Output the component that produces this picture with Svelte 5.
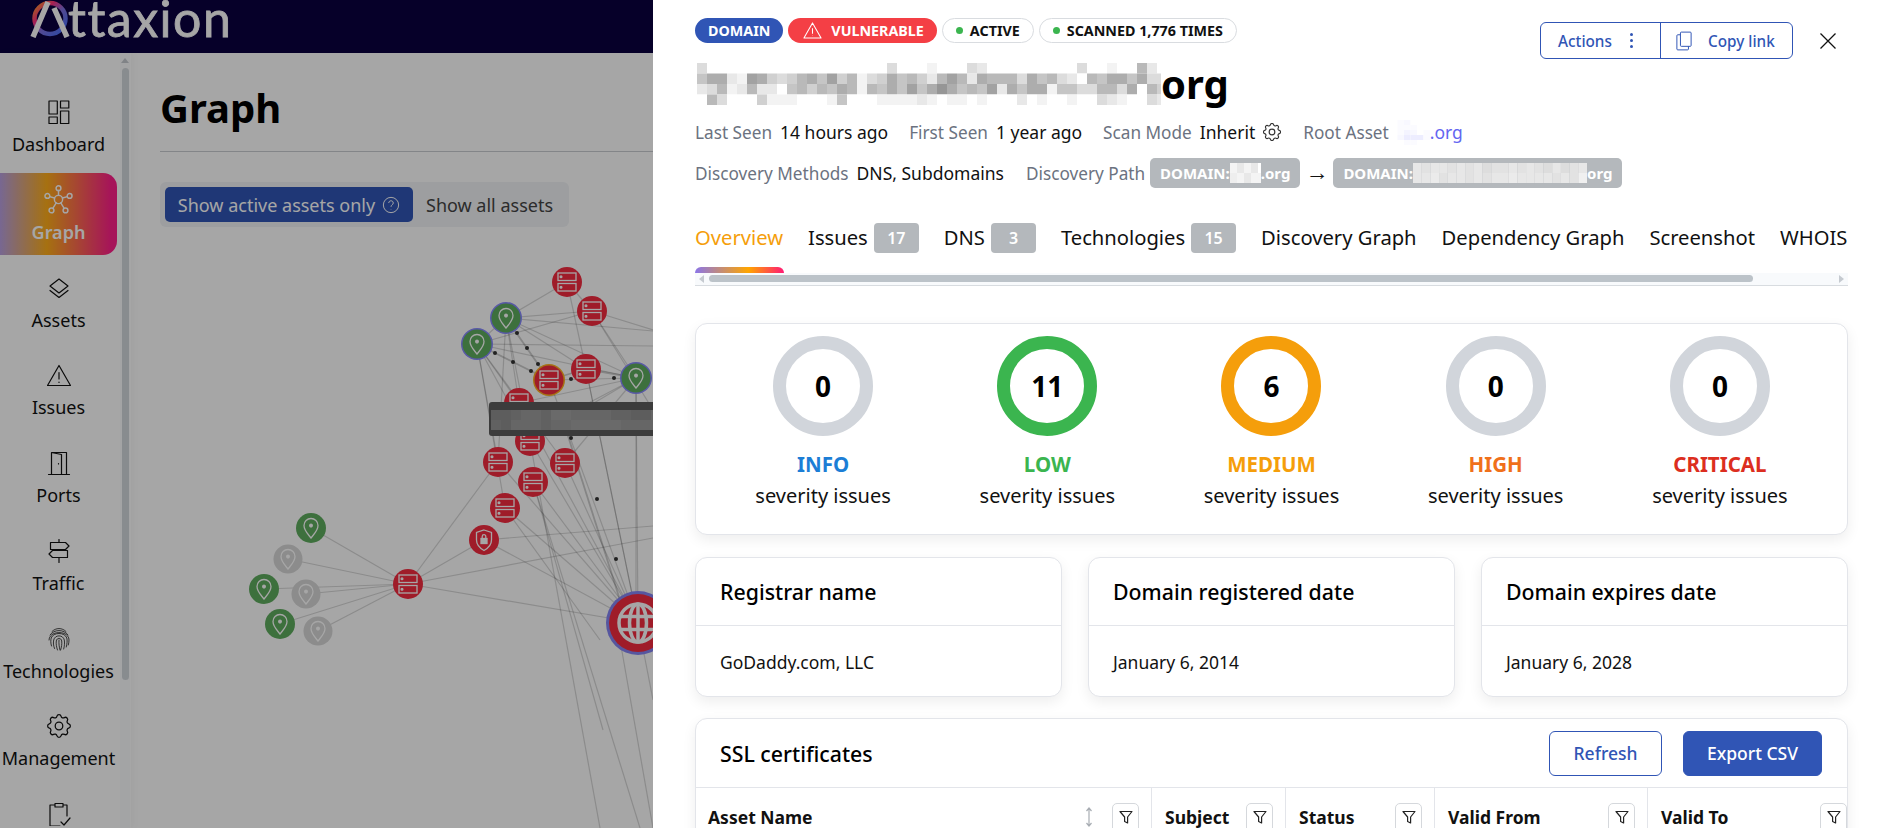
<script>
const navItems = [
  { label: 'Dashboard', icon: 'dashboard' },
  { label: 'Graph', icon: 'graph', active: true },
  { label: 'Assets', icon: 'assets' },
  { label: 'Issues', icon: 'issues' },
  { label: 'Ports', icon: 'ports' },
  { label: 'Traffic', icon: 'traffic' },
  { label: 'Technologies', icon: 'tech' },
  { label: 'Management', icon: 'gear' },
  { label: '', icon: 'tasks' }
]

const nodes = {
  a: [567, 282, 'server'], b: [592, 311, 'server'], c: [506, 318, 'pin', 'ring'], d: [477, 344, 'pin', 'ring'],
  e: [549, 380, 'server', 'warn'], f: [586, 369, 'server'], g: [636, 378, 'pin', 'ring'], h: [519, 403, 'server'],
  i: [562, 417, 'server'], j: [530, 441, 'server'], k: [498, 462, 'server'], l: [565, 463, 'server'],
  m: [533, 482, 'server'], n: [505, 508, 'server'], o: [484, 540, 'shield'], hub: [408, 584, 'server'],
  p1: [311, 528, 'pin'], p2: [288, 559, 'pin', 'off'], p3: [264, 589, 'pin'], p4: [306, 594, 'pin', 'off'],
  p5: [280, 624, 'pin'], p6: [318, 631, 'pin', 'off'], glob: [638, 623, 'globe']
}

const edges = [
  ['hub', 'p1'], ['hub', 'p2'], ['hub', 'p3'], ['hub', 'p4'], ['hub', 'p5'], ['hub', 'p6'], ['hub', 'o'], ['hub', 'k'], ['hub', 'glob'],
  ['o', 'glob'], ['n', 'glob'], ['m', 'glob'], ['l', 'glob'], ['k', 'glob'], ['j', 'glob'], ['h', 'glob'], ['e', 'glob'], ['f', 'glob'],
  ['a', 'c'], ['a', 'b'], ['a', 'f'], ['b', 'c'], ['b', 'd'], ['b', 'g'], ['c', 'd'], ['c', 'f'], ['c', 'h'], ['c', 'j'], ['c', 'k'],
  ['d', 'h'], ['d', 'j'], ['d', 'k'], ['d', 'n'], ['d', 'l'], ['d', 'g'], ['c', 'g'], ['e', 'g'], ['h', 'g'], ['j', 'g'], ['i', 'g'], ['l', 'g'], ['f', 'glob'], ['g', 'glob']
]
const freeEdges = [
  [408, 584, 653, 538], [484, 540, 653, 526], [533, 482, 603, 730], [533, 482, 640, 828], [530, 441, 600, 828],
  [592, 311, 653, 330], [506, 318, 653, 331], [477, 344, 653, 346], [592, 311, 653, 410], [636, 378, 636, 600],
  [638, 623, 653, 700], [620, 640, 653, 828], [505, 508, 600, 640]
]
const dotted = [[506, 318, 549, 380], [477, 344, 549, 380], [549, 380, 586, 369], [586, 369, 636, 378], [562, 417, 620, 600]]
const dots = [[517, 333], [527, 348], [538, 364], [495, 353], [513, 362], [531, 371], [571, 379], [614, 378], [571, 438], [597, 499], [616, 559]]

// mosaics of the blurred hostnames, one hex digit per cell (0 dark, f white)
const titleRows = [
  'cffffffffffffffffffcfffefffcdfffffffffcffeff9df',
  'a88de78bcb98a7b9ecb8a9bd979d8999c8a9cdf9a88a8ccf',
  'dc9ed9ddfa9b9a89e9a8a7a868a9a7d8a88eaacc99c8f9bf',
  'f9cfffbeeefffeafffeeeedefeefefffdfeffeffcdeffcdc'
]
const rootRows = ['fedfff', 'feeeff', 'fecdfe', 'fdaaae', 'ffeeff']
const chipOneRows = ['dbdbff', 'cdbdd']
const chipTwoRows = ['dcddcdcdbccdcdcbdbcd', 'ddecddcdcddeddddcdcf']
const tipRows = ['5567768877776655786', '6577767788888777787']

function gray(v, lo, hi) {
  const n = Math.round(lo + (hi - lo) * parseInt(v, 16) / 15)
  return `rgb(${n},${n},${n})`
}
function lav(v) {
  const k = parseInt(v, 16) / 15
  return `rgb(${Math.round(200 + 55 * k)},${Math.round(200 + 55 * k)},255)`
}

const tabs = [
  { label: 'Overview', active: true },
  { label: 'Issues', count: 17 },
  { label: 'DNS', count: 3 },
  { label: 'Technologies', count: 15 },
  { label: 'Discovery Graph' },
  { label: 'Dependency Graph' },
  { label: 'Screenshot' },
  { label: 'WHOIS' }
]

const severities = [
  { name: 'INFO', n: 0, color: '#1c7ed6', ring: '#d1d5db' },
  { name: 'LOW', n: 11, color: '#3bb54f', ring: '#3bb54f' },
  { name: 'MEDIUM', n: 6, color: '#f59e0b', ring: '#f59e0b' },
  { name: 'HIGH', n: 0, color: '#f0701a', ring: '#d1d5db' },
  { name: 'CRITICAL', n: 0, color: '#dc2e20', ring: '#d1d5db' }
]

const infoCards = [
  { title: 'Registrar name', value: 'GoDaddy.com, LLC' },
  { title: 'Domain registered date', value: 'January 6, 2014' },
  { title: 'Domain expires date', value: 'January 6, 2028' }
]

const columns = [
  { label: 'Asset Name', sort: true },
  { label: 'Subject' },
  { label: 'Status' },
  { label: 'Valid From' },
  { label: 'Valid To' }
]

const gearPath = 'M10.325 4.317c.426-1.756 2.924-1.756 3.35 0a1.724 1.724 0 0 0 2.573 1.066c1.543-.94 3.31.826 2.37 2.37a1.724 1.724 0 0 0 1.065 2.572c1.756.426 1.756 2.924 0 3.35a1.724 1.724 0 0 0-1.066 2.573c.94 1.543-.826 3.31-2.37 2.37a1.724 1.724 0 0 0-2.572 1.065c-.426 1.756-2.924 1.756-3.35 0a1.724 1.724 0 0 0-2.573-1.066c-1.543.94-3.31-.826-2.37-2.37a1.724 1.724 0 0 0-1.065-2.572c-1.756-.426-1.756-2.924 0-3.35a1.724 1.724 0 0 0 1.066-2.573c-.94-1.543.826-3.31 2.37-2.37c1 .608 2.296.07 2.572-1.065z'
</script>

{#snippet navIcon(name)}
  <svg class="nav-icon" class:big={name === 'graph'} viewBox={name === 'gear' ? '2.500 2.500 19 19' : '0 0 24 24'} fill="none" stroke="#111" stroke-width={name === 'gear' ? 1 : name === 'tech' ? .75 : 1.2} stroke-linecap="round" stroke-linejoin="round">
    {#if name === 'dashboard'}
      <rect x="2" y="1" width="8.300" height="13" /><rect x="13.500" y="1" width="8.300" height="7" /><rect x="2" y="17" width="8.300" height="6.500" /><rect x="13.500" y="11" width="8.300" height="12.500" />
    {:else if name === 'graph'}
      <circle cx="12" cy="12" r="3.400" /><circle cx="12" cy="2.600" r="2" /><circle cx="2.800" cy="9" r="2" /><circle cx="21.200" cy="9" r="2" /><circle cx="6.200" cy="21" r="2" /><circle cx="17.800" cy="21" r="2" />
      <path d="M12 4.600v4M4.700 9.600l4 1.200M19.300 9.600l-4 1.200M7.300 19.300l2.800-4.500M16.700 19.300l-2.800-4.500" />
    {:else if name === 'assets'}
      <path d="M12 3l9 7-9 7-9-7zM3 14.500l9 7 9-7" />
    {:else if name === 'issues'}
      <path d="M12 2.500L23.500 22.500H.5zM12 9.500v6.500M12 19v.4" />
    {:else if name === 'ports'}
      <path d="M1.500 23.500h21M4.500 23.500V1.500h15v22M4.500 1.500l10 2v20M11.500 12.500v.4" />
    {:else if name === 'traffic'}
      <path d="M12 .5v3M12 10.500v1M12 18.500v5M3.500 3.500h15l3.500 3.500-3.500 3.500h-15zM20.500 11.500h-15L2 15l3.500 3.500h15z" />
    {:else if name === 'tech'}
      <path d="M5 4.500C9 .5 15 .5 19 4.500M3 8c4-6 14-6 18 0M2 13c0-10 20-10 20 0 0 2-.3 3.500-.7 5M4.500 19c-1-3-.8-6-.3-8 2-6 13.600-6 15.600 0 .6 2.500.3 5.500-.5 9M7.500 21.500c-1.200-3-1.300-6-.8-8.500 1.200-5.500 9.400-5.500 10.600 0 .5 2.500.2 6-.6 9M10.500 23c-1-3-1.600-6-1.200-9 .5-3.500 4.900-3.500 5.400 0 .3 3-.1 6-1.100 9M12 13c-.3 3.500.2 7 1 10" />
    {:else if name === 'gear'}
      <path d={gearPath} /><circle cx="12" cy="12" r="3" />
    {:else}
      <path d="M8 3H3v21h10M16 3h4v11M8 1.500h8V5H8zM14 20l3 3 6-7" />
    {/if}
  </svg>
{/snippet}

{#snippet filterBtn()}
  <span class="filter-btn">
    <svg viewBox="0 0 16 16" fill="none" stroke="#222" stroke-width="1.200" stroke-linejoin="round"><path d="M2 2.500h12l-4.400 5.500v6l-3-1.500v-4.500z" /></svg>
  </span>
{/snippet}

<div class="app">
  <div class="page">
    <header class="topbar">
      <svg class="logo-mark" viewBox="0 0 42 38" fill="none">
        <defs>
          <linearGradient id="logo-ring" x1="0" y1="0" x2="1" y2="1">
            <stop offset="0" stop-color="#ffa820" /><stop offset=".3" stop-color="#ff3080" /><stop offset=".55" stop-color="#8070e0" /><stop offset="1" stop-color="#4070ff" />
          </linearGradient>
        </defs>
        <circle cx="20" cy="18.500" r="15.500" stroke="url(#logo-ring)" stroke-width="4.500" />
        <path d="M3 37L18 2M37 37L24 8" stroke="#fff" stroke-width="5.500" />
      </svg>
      <span class="logo-text">ttaxion</span>
    </header>
    <div class="body">
      <aside class="sidebar">
        <nav class="nav">
          {#each navItems as item}
            <div class="nav-item" class:active={item.active}>
              {@render navIcon(item.icon)}
              <span>{item.label}</span>
            </div>
          {/each}
        </nav>
        <div class="side-scroll">
          <span class="up-arrow"></span>
          <span class="side-thumb"></span>
        </div>
      </aside>
      <main class="main">
        <h1>Graph</h1>
        <div class="switch">
          <span class="switch-on">Show active assets only
            <svg viewBox="0 0 20 20" fill="none" stroke="#fff" stroke-width="1.100"><circle cx="10" cy="10" r="8.500" /><path d="M7.500 7.800c0-3.300 5-3.300 5 0 0 2-2.500 2-2.500 4.200M10 14.500v.4" /></svg>
          </span>
          <span class="switch-off">Show all assets</span>
        </div>
      </main>
    </div>
    <svg class="graph" viewBox="0 0 653 828">
      {#each edges as [from, to]}
        <line x1={nodes[from][0]} y1={nodes[from][1]} x2={nodes[to][0]} y2={nodes[to][1]} stroke="#000" stroke-opacity=".16" stroke-width="1.200" />
      {/each}
      {#each freeEdges as [x1, y1, x2, y2]}
        <line {x1} {y1} {x2} {y2} stroke="#000" stroke-opacity=".16" stroke-width="1.200" />
      {/each}
      {#each dotted as [x1, y1, x2, y2]}
        <line {x1} {y1} {x2} {y2} stroke="#000" stroke-opacity=".2" stroke-width="1.800" />
      {/each}
      {#each dots as [cx, cy]}
        <circle {cx} {cy} r="2" fill="#333" />
      {/each}
      {#each Object.values(nodes) as [x, y, kind, state]}
        <g transform="translate({x} {y})">
          {#if kind === 'globe'}
            <circle r="32" fill="#8585f5" />
            <circle r="29" fill="#f52b40" />
            <g fill="none" stroke="#fff" stroke-width="3.500">
              <circle r="19" />
              <ellipse rx="8.500" ry="19" />
              <path d="M-19 -6.500H19M-19 6.500H19M0 -19V19" />
            </g>
          {:else}
            {#if state === 'ring'}<circle r="16" fill="#8888ff" />{/if}
            {#if state === 'warn'}<circle r="16" fill="#ffb020" />{/if}
            <circle r={state ? 14.500 : 15} fill={state === 'off' ? '#d7d7d7' : kind === 'pin' ? '#5fac5f' : '#f52b40'} />
            <g fill="none" stroke="#fff" stroke-width="1.300">
              {#if kind === 'server'}
                <rect x="-9" y="-9" width="18" height="7.500" />
                <rect x="-9" y="1.500" width="18" height="7.500" />
                <circle cx="-6" cy="-5.200" r=".9" fill="#fff" />
                <circle cx="-6" cy="5.300" r=".9" fill="#fff" />
              {:else if kind === 'pin'}
                <path d="M0 10C-3 6 -7 2.500 -7 -2.500A7 7 0 0 1 7 -2.500C7 2.500 3 6 0 10Z" />
                <circle cy="-2.500" r="1.300" fill="#fff" />
              {:else}
                <path d="M0 -10L7.500 -7.500V0C7.500 5 3.500 8.500 0 10.500C-3.500 8.500 -7.500 5 -7.500 0V-7.500Z" />
                <rect x="-3" y="-1.500" width="6" height="5" fill="#fff" />
                <path d="M-1.800 -1.500V-3.500A1.800 1.800 0 0 1 1.800 -3.500V-1.500" />
              {/if}
            </g>
          {/if}
        </g>
      {/each}
      <rect x="489" y="402" width="170" height="34" rx="3" fill="#5c5c5c" />
      {#each tipRows as row, r}
        {#each row.split('') as v, c}
          <rect x={491 + c * 10} y={410 + r * 10} width="10" height="10" fill={gray(v, 110, 210)} />
        {/each}
      {/each}
    </svg>
  </div>

  <div class="backdrop"></div>

  <section class="drawer">
    <div class="head-row">
      <div class="tags">
        <span class="tag tag-domain">Domain</span>
        <span class="tag tag-vuln">
          <svg viewBox="0 0 20 20" fill="none" stroke="#fff" stroke-width="1.100" stroke-linejoin="round"><path d="M10 2L19 18H1zM10 7.500v6M10 15.500v.4" /></svg>
          Vulnerable
        </span>
        <span class="tag tag-light"><i class="dot"></i>Active</span>
        <span class="tag tag-light"><i class="dot"></i>Scanned 1,776 times</span>
      </div>
      <div class="actions">
        <div class="btn-group">
          <span class="btn-part">Actions <b class="kebab"><i></i><i></i><i></i></b></span>
          <span class="btn-part copy">
            <svg viewBox="0 0 18 22" fill="none" stroke="#3055b5" stroke-width="1.100"><rect x="5" y="1" width="12" height="16" rx="1" /><path d="M5 4H2a1 1 0 0 0-1 1v15a1 1 0 0 0 1 1h11a1 1 0 0 0 1-1v-3" /></svg>
            Copy link
          </span>
        </div>
        <svg class="close" viewBox="0 0 16 16" stroke="#111" stroke-width="1.300" fill="none"><path d="M.5 .5l15 15M15.500 .5l-15 15" /></svg>
      </div>
    </div>

    <h2 class="title">
      <svg class="mosaic" width="464" height="42">
        {#each titleRows as row, r}
          {#each row.split('') as v, c}
            <rect x={c * 10} y={r * 10.500} width="10" height="10.500" fill={gray(v, 80, 255)} />
          {/each}
        {/each}
      </svg>
      <span>org</span>
    </h2>

    <div class="meta">
      <span class="pair"><em>Last Seen</em> 14 hours ago</span>
      <span class="pair"><em>First Seen</em> 1 year ago</span>
      <span class="pair"><em>Scan Mode</em> Inherit
        <svg class="gear" viewBox="2.500 2.500 19 19" fill="none" stroke="#333" stroke-width="1.200"><path d={gearPath} /><circle cx="12" cy="12" r="3" /></svg>
      </span>
      <span class="pair root"><em>Root Asset</em>
        <span class="root-link">
          <svg width="39" height="25">
            {#each rootRows as row, r}
              {#each row.split('') as v, c}
                <rect x={c * 6.500} y={r * 5} width="6.500" height="5" fill={lav(v)} />
              {/each}
            {/each}
          </svg>.org</span>
      </span>
    </div>

    <div class="meta path">
      <span class="pair"><em>Discovery Methods</em> DNS, Subdomains</span>
      <span class="pair trail"><em>Discovery Path</em>
        <span class="chip">DOMAIN:<svg width="31" height="20">
            {#each chipOneRows as row, r}
              {#each row.split('') as v, c}
                <rect x={c * 7} y={r * 10} width="7" height="10" fill={gray(v, 170, 255)} />
              {/each}
            {/each}
          </svg>.org</span>
        <span class="arrow">→</span>
        <span class="chip">DOMAIN:<svg width="174" height="20">
            {#each chipTwoRows as row, r}
              {#each row.split('') as v, c}
                <rect x={c * 8.700} y={r * 10} width="8.700" height="10" fill={gray(v, 170, 240)} />
              {/each}
            {/each}
          </svg>org</span>
      </span>
    </div>

    <div class="tabs">
      {#each tabs as tab}
        <span class="tab" class:on={tab.active}>{tab.label}{#if tab.count}<b>{tab.count}</b>{/if}</span>
      {/each}
    </div>
    <div class="tab-ind"></div>
    <div class="tab-scroll">
      <span class="arr left"></span>
      <span class="tab-thumb"></span>
      <span class="arr right"></span>
    </div>

    <div class="card severity">
      {#each severities as s}
        <div class="sev">
          <div class="ring" style="border-color: {s.ring}">{s.n}</div>
          <strong style="color: {s.color}">{s.name}</strong>
          <span>severity issues</span>
        </div>
      {/each}
    </div>

    <div class="info-row">
      {#each infoCards as c}
        <div class="card info">
          <div class="info-head">{c.title}</div>
          <div class="info-body">{c.value}</div>
        </div>
      {/each}
    </div>

    <div class="card ssl">
      <div class="ssl-head">
        <span>SSL certificates</span>
        <div class="ssl-btns">
          <button class="outline">Refresh</button>
          <button class="solid">Export CSV</button>
        </div>
      </div>
      <div class="thead">
        {#each columns as col}
          <div class="th">
            <span class="th-label">{col.label}</span>
            {#if col.sort}
              <svg class="sort" viewBox="0 0 10 20" fill="none" stroke="#a8adb3" stroke-width="1.200"><path d="M5 1v18M2.500 4L5 1l2.500 3M2.500 16L5 19l2.500-3" /></svg>
            {/if}
            {@render filterBtn()}
          </div>
        {/each}
      </div>
    </div>
  </section>
</div>

<style>
:global(body) {
  margin: 0;
  background: #fff;
  font-family: "Noto Sans", sans-serif;
  color: #111;
}
.app {
  position: relative;
  height: 828px;
  overflow: hidden;
}
.page {
  height: 100%;
  display: flex;
  flex-direction: column;
}
.topbar {
  height: 53px;
  flex: none;
  background: #0a0040;
  display: flex;
  align-items: flex-start;
  padding-left: 30px;
}
.logo-mark {
  width: 42px;
  height: 38px;
  flex: none;
}
.logo-text {
  font-family: Lato, sans-serif;
  font-size: 50px;
  line-height: 36px;
  color: #fff;
  font-weight: 400;
  letter-spacing: 1.500px;
  -webkit-text-stroke: .8px #fff;
  margin-left: -4px;
}
.body {
  flex: 1;
  display: flex;
  min-height: 0;
}
.sidebar {
  width: 131px;
  flex: none;
  display: flex;
  box-shadow: 2px 0 8px rgba(0,0,0,.04);
}
.nav {
  width: 120px;
  padding-top: 32px;
  display: flex;
  flex-direction: column;
  overflow: hidden;
}
.nav-item {
  height: 82px;
  margin-bottom: 5.750px;
  margin-right: 3px;
  padding-top: 5px;
  box-sizing: border-box;
  display: flex;
  flex-direction: column;
  align-items: center;
  justify-content: center;
  gap: 8px;
  font-size: 18px;
  line-height: 25px;
  white-space: nowrap;
  flex: none;
}
.nav-item span {
  min-height: 25px;
}
.nav-item.active {
  color: #fff;
  background: linear-gradient(90deg, #b89fe0 0%, #ffae1a 40%, #ff1f8a 95%);
  border-radius: 0 14px 14px 0;
  font-weight: 600;
}
.nav-icon {
  width: 24px;
  height: 24px;
  flex: none;
}
.nav-icon.big {
  width: 29px;
  height: 29px;
  margin: -3px 0 -2px;
}
.nav-item.active :global(svg),
.nav-item.active :global(svg *) {
  stroke: #fff;
}
.side-scroll {
  width: 10px;
  background: #fbfcfe;
  display: flex;
  flex-direction: column;
  align-items: center;
}
.up-arrow {
  margin-top: 5px;
  border: 4.500px solid transparent;
  border-top: 0;
  border-bottom: 5px solid #c5cad0;
}
.side-thumb {
  width: 7px;
  height: 612px;
  margin-top: 5px;
  background: #d2d7dc;
  border-radius: 4px;
}
.main {
  flex: 1;
  min-width: 0;
  padding: 0 0 0 29px;
}
h1 {
  margin: 0;
  height: 99px;
  box-sizing: border-box;
  font-size: 40px;
  line-height: 109px;
  font-weight: 700;
  border-bottom: 1px solid #c9cdd2;
  color: #000;
}
.switch {
  margin-top: 30px;
  width: 409px;
  height: 45px;
  box-sizing: border-box;
  padding: 5px;
  background: #f1f3f6;
  border-radius: 6px;
  display: flex;
  align-items: stretch;
  font-size: 18px;
}
.switch-on {
  width: 248px;
  background: #3055b5;
  color: #fff;
  border-radius: 5px;
  display: flex;
  align-items: center;
  justify-content: center;
  gap: 7px;
}
.switch-on svg {
  width: 18px;
  height: 18px;
}
.switch-off {
  padding-left: 13px;
  display: flex;
  align-items: center;
  color: #444;
}
.graph {
  position: absolute;
  left: 0;
  top: 0;
  width: 653px;
  height: 828px;
}
.backdrop {
  position: absolute;
  inset: 0;
  background: rgba(0,0,0,.35);
}
.drawer {
  position: absolute;
  left: 653px;
  right: 0;
  top: 0;
  bottom: 0;
  background: #fff;
  padding: 18px 33px 0 42px;
  overflow: hidden;
}
.head-row {
  height: 25px;
  display: flex;
  justify-content: space-between;
  align-items: flex-start;
}
.tags {
  display: flex;
  gap: 5px;
}
.tag {
  height: 25px;
  box-sizing: border-box;
  border-radius: 13px;
  padding: 0 13px;
  display: flex;
  align-items: center;
  font-size: 14.300px;
  font-weight: 700;
  text-transform: uppercase;
  white-space: nowrap;
}
.tag-domain {
  background: #3055b5;
  color: #fff;
}
.tag-vuln {
  background: #f43f45;
  color: #fff;
  gap: 9px;
  padding: 0 13px 0 15px;
}
.tag-vuln svg {
  width: 19px;
  height: 19px;
}
.tag-light {
  border: 1px solid #d9dce0;
  color: #111;
}
.dot {
  width: 7px;
  height: 7px;
  border-radius: 50%;
  background: #3bb54f;
  margin-right: 7px;
}
.actions {
  display: flex;
  align-items: center;
  gap: 27px;
  margin-top: 4px;
}
.btn-group {
  width: 253px;
  height: 37px;
  box-sizing: border-box;
  border: 1.500px solid #3055b5;
  border-radius: 6px;
  display: flex;
  color: #3055b5;
  font-size: 15.300px;
  font-weight: 500;
}
.btn-part {
  display: flex;
  align-items: center;
  width: 120px;
  padding-left: 17px;
  box-sizing: border-box;
  flex: none;
  border-right: 1.500px solid #3055b5;
  gap: 18px;
}
.btn-part.copy {
  border: 0;
  flex: 1;
  gap: 16px;
  padding-left: 15px;
}
.btn-part.copy svg {
  width: 16px;
  height: 20px;
}
.kebab {
  display: flex;
  flex-direction: column;
  gap: 3px;
}
.kebab i {
  width: 3px;
  height: 3px;
  border-radius: 50%;
  background: #3055b5;
}
.close {
  width: 16px;
  height: 16px;
  margin-right: 12px;
}
.title {
  margin: 20px 0 0 2px;
  height: 42px;
  display: flex;
  align-items: center;
  font-size: 40px;
  font-weight: 700;
  line-height: 42px;
  color: #000;
}
.mosaic {
  flex: none;
}
.meta {
  margin-top: 15px;
  height: 24px;
  display: flex;
  align-items: center;
  gap: 21px;
  font-size: 17.500px;
  white-space: nowrap;
}
.meta.path {
  margin-top: 14px;
  height: 30px;
}
.pair {
  display: flex;
  align-items: center;
  gap: 8px;
}
.pair.root {
  margin-left: 1px;
}
.pair.trail {
  gap: 5px;
  margin-left: 1px;
}
.pair em {
  font-style: normal;
  font-size: 17.200px;
  color: #6b7280;
}
.gear {
  width: 18px;
  height: 18px;
}
.root-link {
  color: #6366f1;
  display: flex;
  align-items: center;
  margin-left: -6px;
}
.chip {
  height: 30px;
  padding: 0 10px;
  border-radius: 5px;
  background: #b4b8bc;
  color: #fff;
  font-weight: 700;
  font-size: 15px;
  display: flex;
  align-items: center;
}
.arrow {
  color: #111;
  font-size: 23px;
  line-height: 24px;
  margin-bottom: 4px;
}
.tabs {
  margin-top: 35px;
  height: 30px;
  display: flex;
  gap: 25px;
  overflow: hidden;
  font-size: 20.200px;
  line-height: 28px;
  white-space: nowrap;
}
.tab {
  display: flex;
  align-items: flex-start;
  color: #111;
}
.tab.on {
  color: #f59e0b;
}
.tab b {
  margin-left: 6px;
  width: 45px;
  height: 30px;
  border-radius: 4px;
  background: #b4b8bc;
  color: #fff;
  font-size: 16px;
  line-height: 30px;
  text-align: center;
  font-weight: 600;
}
.tab-ind {
  margin-top: 14px;
  width: 89px;
  height: 6px;
  border-radius: 6px 6px 0 0;
  background: linear-gradient(90deg, #8b75e8, #ffa500 60%, #ff1a75);
}
.tab-scroll {
  height: 13px;
  box-sizing: border-box;
  background: #f8fafc;
  border-bottom: 1px solid #d8dce0;
  display: flex;
  align-items: center;
  padding: 0 4px 1px;
}
.tab-thumb {
  width: 1044px;
  height: 7px;
  margin-left: 5px;
  background: #bcc3c9;
  border-radius: 4px;
}
.arr {
  border: 4px solid transparent;
}
.arr.left {
  border-left: 0;
  border-right: 5px solid #c5cad0;
}
.arr.right {
  margin-left: auto;
  border-right: 0;
  border-left: 5px solid #c5cad0;
}
.card {
  border: 1px solid #e3e5ea;
  border-radius: 12px;
  background: #fff;
  box-shadow: 0 5px 14px rgba(0,0,0,.07);
  box-sizing: border-box;
}
.severity {
  margin-top: 37px;
  height: 212px;
  display: grid;
  grid-template-columns: repeat(5, 1fr);
  padding: 12px 15px 0;
}
.sev {
  display: flex;
  flex-direction: column;
  align-items: center;
  font-size: 20px;
  line-height: 31px;
}
.ring {
  width: 100px;
  height: 100px;
  box-sizing: border-box;
  border: 13px solid #d1d5db;
  border-radius: 50%;
  display: flex;
  align-items: center;
  justify-content: center;
  font-size: 28px;
  font-weight: 700;
  color: #000;
  margin-bottom: 13px;
}
.sev strong {
  font-size: 20.500px;
  font-weight: 700;
}
.info-row {
  margin-top: 22px;
  display: grid;
  grid-template-columns: repeat(3, 1fr);
  gap: 26px;
}
.info {
  height: 140px;
}
.info-head {
  height: 68px;
  box-sizing: border-box;
  border-bottom: 1px solid #e3e5ea;
  padding-left: 24px;
  display: flex;
  align-items: center;
  font-size: 21.300px;
  font-weight: 500;
  color: #000;
}
.info-body {
  padding: 24px;
  font-size: 17.500px;
  line-height: 24px;
}
.ssl {
  margin-top: 21px;
  height: 200px;
}
.ssl-head {
  height: 69px;
  box-sizing: border-box;
  border-bottom: 1px solid #e3e5ea;
  padding: 0 25px 0 24px;
  display: flex;
  align-items: center;
  justify-content: space-between;
  font-size: 21.300px;
  font-weight: 500;
  color: #000;
}
.ssl-btns {
  display: flex;
  gap: 21px;
}
.ssl-btns button {
  height: 45px;
  border-radius: 6px;
  font: 500 17.500px "Noto Sans", sans-serif;
  border: 1.500px solid #3055b5;
}
.outline {
  width: 113px;
  background: #fff;
  color: #3055b5;
}
.solid {
  width: 139px;
  background: #3055b5;
  color: #fff;
}
.thead {
  display: grid;
  grid-template-columns: 456px 134px 149px 213px 1fr;
}
.th {
  height: 100px;
  box-sizing: border-box;
  padding: 15px 0 0 13px;
  border-right: 1px solid #e3e5ea;
  display: flex;
  gap: 10px;
  font-size: 17.500px;
  font-weight: 700;
}
.th:first-child {
  padding-left: 12px;
}
.th:last-child {
  border-right: 0;
}
.th-label {
  margin-right: auto;
  line-height: 28px;
}
.sort {
  width: 10px;
  height: 20px;
  margin-top: 4px;
  margin-right: 8px;
}
.filter-btn {
  width: 27px;
  height: 32px;
  box-sizing: border-box;
  border: 1px solid #d5d8dc;
  border-radius: 5px;
  margin-right: 12px;
  display: flex;
  align-items: flex-start;
  justify-content: center;
  padding-top: 5px;
}
.th:last-child .filter-btn {
  margin-right: 0;
}
.filter-btn svg {
  width: 16px;
  height: 16px;
}
</style>
